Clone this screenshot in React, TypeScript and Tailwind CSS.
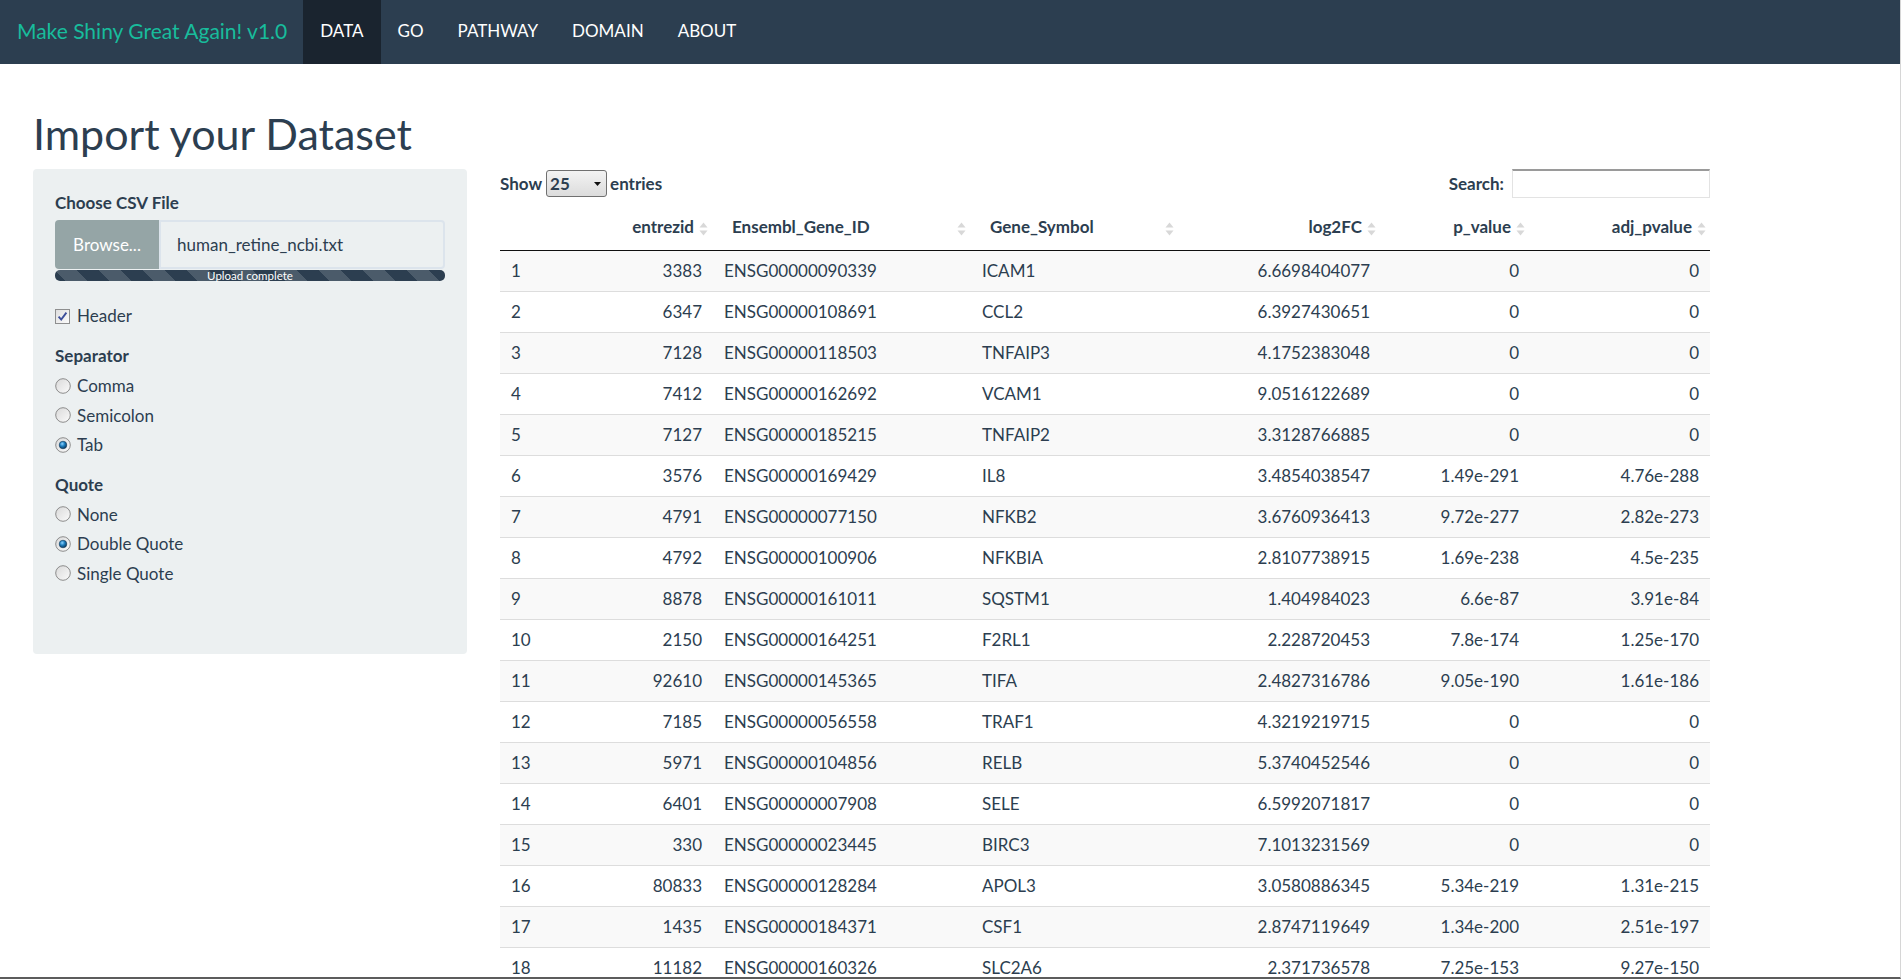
import React from "react";

// gene table rows shown on the DATA tab
const rows: [string, string, string, string, string, string, string][] = [
  ["1", "3383", "ENSG00000090339", "ICAM1", "6.6698404077", "0", "0"],
  ["2", "6347", "ENSG00000108691", "CCL2", "6.3927430651", "0", "0"],
  ["3", "7128", "ENSG00000118503", "TNFAIP3", "4.1752383048", "0", "0"],
  ["4", "7412", "ENSG00000162692", "VCAM1", "9.0516122689", "0", "0"],
  ["5", "7127", "ENSG00000185215", "TNFAIP2", "3.3128766885", "0", "0"],
  ["6", "3576", "ENSG00000169429", "IL8", "3.4854038547", "1.49e-291", "4.76e-288"],
  ["7", "4791", "ENSG00000077150", "NFKB2", "3.6760936413", "9.72e-277", "2.82e-273"],
  ["8", "4792", "ENSG00000100906", "NFKBIA", "2.8107738915", "1.69e-238", "4.5e-235"],
  ["9", "8878", "ENSG00000161011", "SQSTM1", "1.404984023", "6.6e-87", "3.91e-84"],
  ["10", "2150", "ENSG00000164251", "F2RL1", "2.228720453", "7.8e-174", "1.25e-170"],
  ["11", "92610", "ENSG00000145365", "TIFA", "2.4827316786", "9.05e-190", "1.61e-186"],
  ["12", "7185", "ENSG00000056558", "TRAF1", "4.3219219715", "0", "0"],
  ["13", "5971", "ENSG00000104856", "RELB", "5.3740452546", "0", "0"],
  ["14", "6401", "ENSG00000007908", "SELE", "6.5992071817", "0", "0"],
  ["15", "330", "ENSG00000023445", "BIRC3", "7.1013231569", "0", "0"],
  ["16", "80833", "ENSG00000128284", "APOL3", "3.0580886345", "5.34e-219", "1.31e-215"],
  ["17", "1435", "ENSG00000184371", "CSF1", "2.8747119649", "1.34e-200", "2.51e-197"],
  ["18", "11182", "ENSG00000160326", "SLC2A6", "2.371736578", "7.25e-153", "9.27e-150"],
];

const SortIcon = () => (
  <svg width="9" height="15" viewBox="0 0 9 15" className="absolute right-[4px] top-1/2 -translate-y-1/2">
    <path d="M4.5 1 L8.5 6 H0.5 Z" fill="#d8d8d8" />
    <path d="M4.5 14 L8.5 9 H0.5 Z" fill="#d8d8d8" />
  </svg>
);

const Radio = ({ checked }: { checked?: boolean }) => (
  <svg width="16" height="16" viewBox="0 0 16 16" className="shrink-0">
    <defs>
      <linearGradient id="radioBg" x1="0" y1="0" x2="1" y2="1">
        <stop offset="0" stopColor="#d9d9d9" />
        <stop offset="1" stopColor="#fbfbfb" />
      </linearGradient>
      <radialGradient id="radioDot" cx="0.4" cy="0.35" r="0.7">
        <stop offset="0" stopColor="#8fd3ff" />
        <stop offset="0.45" stopColor="#1d7fc0" />
        <stop offset="1" stopColor="#0a2f52" />
      </radialGradient>
    </defs>
    <circle cx="8" cy="8" r="7.3" fill="url(#radioBg)" stroke="#8c8c8c" strokeWidth="1" />
    {checked && <circle cx="8" cy="8" r="3.8" fill="url(#radioDot)" stroke="#123a5a" strokeWidth="0.6" />}
  </svg>
);

const Checkbox = () => (
  <svg width="15" height="15" viewBox="0 0 15 15" className="shrink-0">
    <defs>
      <linearGradient id="cbBg" x1="0" y1="0" x2="1" y2="1">
        <stop offset="0" stopColor="#dedede" />
        <stop offset="1" stopColor="#fcfcfc" />
      </linearGradient>
    </defs>
    <rect x="0.5" y="0.5" width="14" height="14" fill="url(#cbBg)" stroke="#8e8f8f" />
    <path d="M3.6 7.6 L6.2 10.6 L11.4 3.6" fill="none" stroke="#3c4e9a" strokeWidth="1.9" />
  </svg>
);

const navItems = ["DATA", "GO", "PATHWAY", "DOMAIN", "ABOUT"];

export default function App() {
  return (
    <div className="w-[1901px] h-[979px] overflow-hidden bg-white border-r border-r-[#d6d6d6] border-b-2 border-b-[#5c5c5c] font-['Lato','Liberation_Sans',sans-serif] text-[#2c3e50] text-[17px]">
      {/* navbar */}
      <div className="h-[64px] bg-[#2c3e50] flex items-stretch">
        <div className="pl-[17px] pr-[16px] flex items-center text-[21px] text-[#18bc9c] pb-[3px]">
          Make Shiny Great Again! v1.0
        </div>
        {navItems.map((item, i) => (
          <div
            key={item}
            className={
              i === 0
                ? "px-[17px] flex items-center text-white bg-[#1a242f] pb-[2px]"
                : "px-[17px] flex items-center text-white pb-[2px]"
            }
          >
            {item}
          </div>
        ))}
      </div>

      <div className="pl-[33px]">
        <h1 className="mt-[46px] h-[48px] leading-[48px] text-[43px] font-normal mb-[11px]">Import your Dataset</h1>

        <div className="flex gap-[33px] items-start">
          {/* sidebar */}
          <div className="w-[434px] h-[485px] bg-[#ecf0f1] rounded-[4px] px-[22px] pt-[22px] flex flex-col">
            <div className="h-[24px] leading-[24px] font-bold">Choose CSV File</div>
            <div className="mt-[5px] h-[49px] flex">
              <div className="w-[104px] bg-[#95a5a6] text-white rounded-l-[4px] flex items-center justify-center">
                Browse...
              </div>
              <div className="flex-1 border-2 border-[#dce4ec] rounded-r-[4px] bg-[#ecf0f1] flex items-center pl-[16px]">
                human_retine_ncbi.txt
              </div>
            </div>
            <div className="mt-[1px] h-[11px] rounded-[5px] bg-[#2c3e50] bg-[linear-gradient(45deg,rgba(255,255,255,.15)_25%,transparent_25%,transparent_50%,rgba(255,255,255,.15)_50%,rgba(255,255,255,.15)_75%,transparent_75%,transparent)] bg-[length:44px_44px] text-white text-[11.5px] leading-[11px] text-center">
              Upload complete
            </div>

            <div className="mt-[23px] h-[24px] flex items-center gap-[7px]">
              <Checkbox />
              <span>Header</span>
            </div>

            <div className="mt-[16px] h-[24px] leading-[24px] font-bold">Separator</div>
            <div className="mt-[3px] flex flex-col">
              {[
                ["Comma", false],
                ["Semicolon", false],
                ["Tab", true],
              ].map(([label, on]) => (
                <div key={label as string} className="h-[29.5px] flex items-center gap-[6px]">
                  <Radio checked={on as boolean} />
                  <span>{label}</span>
                </div>
              ))}
            </div>

            <div className="mt-[13px] h-[24px] leading-[24px] font-bold">Quote</div>
            <div className="mt-[3px] flex flex-col">
              {[
                ["None", false],
                ["Double Quote", true],
                ["Single Quote", false],
              ].map(([label, on]) => (
                <div key={label as string} className="h-[29.5px] flex items-center gap-[6px]">
                  <Radio checked={on as boolean} />
                  <span>{label}</span>
                </div>
              ))}
            </div>
          </div>

          {/* main panel */}
          <div className="w-[1210px]">
            <div className="h-[29px] flex items-center justify-between">
              <div className="flex items-center font-bold">
                <span>Show</span>
                <div className="ml-[4px] w-[61px] h-[27px] border border-[#707070] rounded-[3px] bg-[linear-gradient(#f3f3f3,#dcdcdc)] flex items-center justify-between pl-[3px] pr-[5px]">
                  <span className="font-bold">25</span>
                  <svg width="7" height="4" viewBox="0 0 7 4">
                    <path d="M0 0 H7 L3.5 4 Z" fill="#111" />
                  </svg>
                </div>
                <span className="ml-[3px]">entries</span>
              </div>
              <div className="flex items-center font-bold">
                <span>Search:</span>
                <div className="ml-[8px] w-[198px] h-[29px] border border-[#e3e3e3] border-t-[#9a9a9a] border-t-2 bg-white" />
              </div>
            </div>

            <table className="mt-[10px] w-[1210px] table-fixed border-collapse">
              <colgroup>
                <col className="w-[100px]" />
                <col className="w-[112px]" />
                <col className="w-[258px]" />
                <col className="w-[208px]" />
                <col className="w-[202px]" />
                <col className="w-[149px]" />
                <col className="w-[181px]" />
              </colgroup>
              <thead>
                <tr className="h-[42px] border-b border-[#111]">
                  <th className="pl-[10px] pb-[4px]"></th>
                  <th className="relative text-right pr-[18px] pb-[4px] font-bold">
                    entrezid
                    <SortIcon />
                  </th>
                  <th className="relative text-left pl-[20px] pb-[4px] font-bold">
                    Ensembl_Gene_ID
                    <SortIcon />
                  </th>
                  <th className="relative text-left pl-[20px] pb-[4px] font-bold">
                    Gene_Symbol
                    <SortIcon />
                  </th>
                  <th className="relative text-right pr-[18px] pb-[4px] font-bold">
                    log2FC
                    <SortIcon />
                  </th>
                  <th className="relative text-right pr-[18px] pb-[4px] font-bold">
                    p_value
                    <SortIcon />
                  </th>
                  <th className="relative text-right pr-[18px] pb-[4px] font-bold">
                    adj_pvalue
                    <SortIcon />
                  </th>
                </tr>
              </thead>
              <tbody>
                {rows.map((r, i) => (
                  <tr
                    key={r[0]}
                    className={
                      (i % 2 === 0 ? "bg-[#f9f9f9] " : "bg-white ") +
                      (i === 0 ? "h-[41px]" : "h-[41px] border-t border-[#ddd]")
                    }
                  >
                    <td className="pl-[11px]">{r[0]}</td>
                    <td className="text-right pr-[10px]">{r[1]}</td>
                    <td className="pl-[12px]">{r[2]}</td>
                    <td className="pl-[12px]">{r[3]}</td>
                    <td className="text-right pr-[10px]">{r[4]}</td>
                    <td className="text-right pr-[10px]">{r[5]}</td>
                    <td className="text-right pr-[11px]">{r[6]}</td>
                  </tr>
                ))}
              </tbody>
            </table>
          </div>
        </div>
      </div>
    </div>
  );
}
